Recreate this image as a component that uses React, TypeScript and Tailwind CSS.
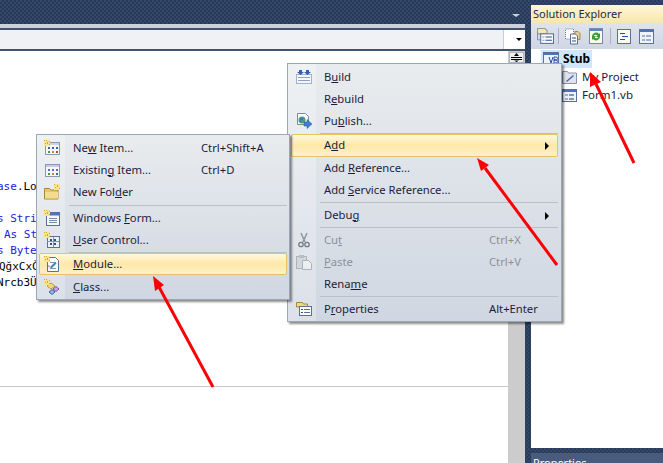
import React from 'react';

const Spark = () => (
  <g>
    <rect x="0" y="0" width="6" height="6" fill="#f8e48a" />
    <path d="M0 0h1v1H0zM2 0h1v1H2zM5 1h1v1H5zM1 3h1v1H1zM3 2h1v2H3zM5 4h1v1H5z" fill="#e0a820" />
  </g>
);

const NewItemIcon = () => (
  <svg width="16" height="16" viewBox="0 0 16 16">
    <rect x="1.5" y="2.5" width="14" height="12" fill="#f4f6fb" stroke="#8a97b5" />
    <rect x="2" y="3" width="13" height="2" fill="#c8d4ec" />
    <path d="M4 7h2v2H4zM8 7h2v2H8zM12 7h2v2h-2z" fill="#3a64b0" />
    <path d="M4 11h2v2H4z" fill="#4a9a3a" />
    <path d="M8 11h2v2H8z" fill="#d08a28" />
    <path d="M12 11h2v2h-2z" fill="#b04a4a" />
    <Spark />
  </svg>
);

const ExistingItemIcon = () => (
  <svg width="16" height="16" viewBox="0 0 16 16">
    <rect x="1.5" y="2.5" width="14" height="12" fill="#f4f6fb" stroke="#8a97b5" />
    <rect x="2" y="3" width="13" height="2" fill="#c8c8ec" />
    <path d="M4 7h2v2H4zM8 7h2v2H8zM12 7h2v2h-2z" fill="#6a64c0" />
    <path d="M4 11h2v2H4z" fill="#4a9a3a" />
    <path d="M8 11h2v2H8z" fill="#d08a28" />
    <path d="M12 11h2v2h-2z" fill="#3a64b0" />
  </svg>
);

const NewFolderIcon = () => (
  <svg width="16" height="16" viewBox="0 0 16 16">
    <path d="M0.5 4.5h5l1.5 1.5h7v9h-13.5z" fill="#e8c76a" stroke="#a8873a" />
    <rect x="1" y="8" width="13" height="6.5" fill="#f3dc90" />
    <rect x="10" y="0" width="6" height="6" fill="#f8e48a" />
    <path d="M10 0h1v1h-1zM13 1h1v2h-1zM15 4h1v1h-1zM11 3h1v1h-1z" fill="#e0a820" />
  </svg>
);

const WindowsFormIcon = () => (
  <svg width="16" height="16" viewBox="0 0 16 16">
    <rect x="2.5" y="2.5" width="13" height="13" fill="#f6f7fb" stroke="#5d6f96" />
    <rect x="3" y="3" width="12" height="2.5" fill="#4c74b8" />
    <path d="M5 8h8v1H5zM5 10h8v1H5zM5 12h8v1H5z" fill="#7d8aa6" />
    <Spark />
  </svg>
);

const UserControlIcon = () => (
  <svg width="16" height="16" viewBox="0 0 16 16">
    <rect x="3.5" y="4.5" width="12" height="11" fill="#eef1f8" stroke="#5d6f96" />
    <path d="M6 7h2v2H6zM10 7h2v2h-2zM6 11h2v2H6zM10 11h2v2h-2z" fill="#2f4e86" />
    <path d="M3 9h12v1H3zM9 5h1v10H9z" fill="#8494b4" />
    <Spark />
  </svg>
);

const ModuleIcon = () => (
  <svg width="16" height="16" viewBox="0 0 16 16">
    <path d="M3.5 1.5h8l3 3v11h-11z" fill="#fbfcff" stroke="#5d6f96" />
    <path d="M6 6h6v1H6zM6 12h6v1H6z" fill="#8494b4" />
    <path d="M6 11l5-5 1.5 1.5-5 5z" fill="#3f8f9e" />
    <path d="M4 9l2 1-1 2z" fill="#c860c0" />
    <Spark />
  </svg>
);

const ClassIcon = () => (
  <svg width="16" height="16" viewBox="0 0 16 16">
    <path d="M3 7l4-3 4 3-4 3z" fill="#f2d97a" stroke="#b89a3a" />
    <path d="M9 10l3-2.5 3 2.5-3 2.5z" fill="#c9a6e6" stroke="#7a55a8" />
    <path d="M5 13l3-2.5 3 2.5-3 2.5z" fill="#8db4e6" stroke="#44689e" />
    <Spark />
  </svg>
);

const BuildIcon = () => (
  <svg width="16" height="16" viewBox="0 0 16 16">
    <rect x="0.5" y="5.5" width="15" height="9" fill="#f4f6fb" stroke="#5d6f96" strokeDasharray="1 1" />
    <path d="M2 8h12v1H2zM2 11h12v1H2z" fill="#8ea0c6" />
    <path d="M3 1h3v2h2L4.500 6 1 3h2zM10 1h3v2h2l-3.500 3L8 3h2z" fill="#2f5fb4" />
  </svg>
);

const PublishIcon = () => (
  <svg width="16" height="16" viewBox="0 0 16 16">
    <path d="M1.500 0.500h8l3 3v8h-11z" fill="#f8f9fc" stroke="#7a88a6" />
    <circle cx="6" cy="7" r="3.500" fill="#4f9e64" />
    <path d="M4 5h3v2H5v2H4z" fill="#3a78c0" />
    <path d="M8 9h3V6.500L16 11l-5 4.500V13H8z" fill="#3f7ed0" stroke="#2a5a9e" strokeWidth="0.5" />
  </svg>
);

const CutIcon = () => (
  <svg width="16" height="16" viewBox="0 0 16 16">
    <path d="M5 1l4 9M11 1L7 10" stroke="#8f949b" strokeWidth="1.500" fill="none" />
    <circle cx="5" cy="12.500" r="2.200" fill="none" stroke="#777c84" strokeWidth="1.300" />
    <circle cx="11" cy="12.500" r="2.200" fill="none" stroke="#777c84" strokeWidth="1.300" />
  </svg>
);

const PasteIcon = () => (
  <svg width="16" height="16" viewBox="0 0 16 16" className="opacity-70">
    <rect x="0.500" y="2.500" width="10" height="12" fill="#cfd2d8" stroke="#9a9ea6" />
    <rect x="3" y="1" width="5" height="3" fill="#a8acb4" />
    <path d="M6.500 6.500h6l3 3v6h-9z" fill="#f2f3f6" stroke="#9a9ea6" />
  </svg>
);

const PropertiesIcon = () => (
  <svg width="16" height="16" viewBox="0 0 16 16">
    <path d="M0.500 1.500h6l1 1.500h4v3h-11z" fill="#f0d78a" stroke="#a8873a" />
    <rect x="3.500" y="5.500" width="12" height="9" fill="#fbfcff" stroke="#5d6f96" />
    <path d="M5 8h2v1H5zM5 11h2v1H5z" fill="#2f4e86" />
    <path d="M8 8h6v1H8zM8 11h6v1H8z" fill="#5d6f96" />
  </svg>
);

const Separator = ({ className }: { className: string }) => (
  <div className={`relative flex items-center ${className}`}>
    <div className="h-px w-full bg-[#b8c0cc]" />
  </div>
);

type RowProps = {
  icon?: React.ReactNode;
  label: React.ReactNode;
  shortcut?: string;
  active?: boolean;
  disabled?: boolean;
  submenu?: boolean;
  labelClass: string;
  height?: string;
};

const MenuRow = ({ icon, label, shortcut, active, disabled, submenu, labelClass, height = 'h-[22px]' }: RowProps) => (
  <div
    className={`relative flex items-center ${height} pl-[4px] border rounded-[2px] ${
      active
        ? 'border-[#e5c365] bg-linear-to-b from-[#fff8dc] via-[#fee8a8] to-[#fdf1c8]'
        : 'border-transparent'
    } ${disabled ? 'text-[#8c9097]' : 'text-[#1c1c3c]'}`}
  >
    <div className="w-[16px] h-[16px] shrink-0">{icon}</div>
    <div className={`whitespace-nowrap ${labelClass}`}>{label}</div>
    {shortcut && <div className="whitespace-nowrap">{shortcut}</div>}
    {submenu && <div className="absolute right-[8px] top-[7px] w-0 h-0 border-y-[4px] border-y-transparent border-l-[4px] border-l-black" />}
  </div>
);

const Arrow = ({ shaft, head }: { shaft: string; head: string }) => (
  <g>
    <polyline points={shaft} stroke="#fb0007" strokeWidth="3" fill="none" />
    <polygon points={head} fill="#fb0007" />
  </g>
);

const navy =
  'bg-[#2e4163] bg-[image:repeating-conic-gradient(#293a59_0_25%,#344869_0_50%)] bg-[length:4px_4px]';

const rightLabel = 'ml-[12px] w-[165px]';
const leftLabel = 'ml-[13px] w-[128px]';

export default function App() {
  return (
    <div
      className={`relative flex w-[663px] h-[463px] overflow-hidden text-[11.25px] ${navy}`}
      style={{ fontFamily: '"Noto Sans", sans-serif' }}
    >
      {/* left: editor */}
      <div className="flex flex-col w-[525px] shrink-0">
        <div className="relative h-[24px] shrink-0">
          <div className="absolute right-[5px] top-[14px] w-0 h-0 border-x-[4px] border-x-transparent border-t-[3px] border-t-[#ced4df]" />
        </div>
        <div className="h-[4px] shrink-0 bg-[#ccd0dd]" />
        <div className="flex justify-end h-[23px] shrink-0 bg-[#f0f1f5] border-y-2 border-[#41526f]">
          <div className="flex items-center justify-end w-[22px] pr-[3px] bg-white border-l border-[#c8ccd4]">
            <div className="w-0 h-0 border-x-[3.5px] border-x-transparent border-t-[3px] border-t-black" />
          </div>
        </div>
        <div className="flex flex-1 min-h-0">
          <div className="flex-1 bg-white flex flex-col">
            <div
              className="h-[336px] shrink-0 pt-[128px] border-b border-[#c8c8c8] text-[11px] leading-[16px] whitespace-nowrap overflow-hidden"
              style={{ fontFamily: '"DejaVu Sans Mono", monospace' }}
            >
              <div className="-ml-[3px]"><span className="text-[#2020e0]">ase</span><span>.Lo</span></div>
              <div className="h-[16px]" />
              <div className="-ml-[3px] text-[#2020e0]">s Stri</div>
              <div className="ml-[4px] text-[#2020e0]">As St</div>
              <div className="-ml-[3px] text-[#2020e0]">s Byte</div>
              <div className="-ml-[1px] text-black">QğxCxČ</div>
              <div className="-ml-[3px] text-black">Nrcb3Ü</div>
            </div>
          </div>
          <div className="w-[17px] shrink-0 bg-[#cccccc] pt-[1px] pl-[1px]">
            <div className="flex items-center justify-center w-[15px] h-[11px] bg-[#eef0f4] border border-[#b0b6c0]">
              <svg width="11" height="9" viewBox="0 0 11 9">
                <path d="M0 4h11v1H0zM0 6h11v1H0z" fill="#000" />
                <path d="M5.500 0L8 3H3zM5.500 9L3 7.500h5z" fill="#000" />
              </svg>
            </div>
          </div>
        </div>
      </div>

      {/* navy gap, then solution explorer */}
      <div className="flex flex-col ml-[6px] flex-1 pt-[5px]">
        <div className="h-[18px] shrink-0 pl-[2px] flex items-center bg-linear-to-b from-[#fff6d6] to-[#f8e6ad] text-[11px] text-[#1b2a44] whitespace-nowrap">
          Solution Explorer
        </div>
        <div className="flex items-center h-[26px] shrink-0 pl-[6px] bg-linear-to-b from-[#dfe3ec] to-[#cfd6e4]">
          <svg width="17" height="17" viewBox="0 0 16 16"><path d="M0.500 0.500h7l2 2v3h-9z" fill="#f3e6b8" stroke="#9a9a8a" /><path d="M0.500 3v8h3" fill="none" stroke="#8a94a6" /><rect x="3.500" y="5.500" width="12" height="9" fill="#fbfcff" stroke="#5d6f96" /><path d="M5 8h2v1H5zM5 11h2v1H5z" fill="#8494b4" /><path d="M8 8h6v1H8zM8 11h6v1H8z" fill="#2f4e86" /></svg>
          <div className="w-px h-[16px] bg-[#a8b2c4] ml-[4px]" />
          <svg className="ml-[6px]" width="16" height="17" viewBox="0 0 16 16"><rect x="0.500" y="0.500" width="8" height="10" fill="#fff" stroke="#707a8c" strokeDasharray="1 1" /><path d="M10 3h3l2 2v6h-5z" fill="#e8cf90" stroke="#a8873a" /><path d="M5.500 5.500h5l2 2v8h-7z" fill="#fbfcff" stroke="#5d6f96" /><path d="M7 9h4v1H7zM7 12h4v1H7z" fill="#2f4e86" /></svg>
          <svg className="ml-[8px]" width="14" height="16" viewBox="0 0 14 16"><rect x="0.500" y="0.500" width="13" height="15" fill="#fbfce8" stroke="#7a88a6" /><rect x="1" y="1" width="12" height="2" fill="#5a86c8" /><path d="M3 8a4 4 0 0 1 7-2l1-1v4H7l1.500-1.500A2.500 2.500 0 0 0 4.500 8zM11 9a4 4 0 0 1-7 2l-1 1V8h4l-1.500 1.500A2.500 2.500 0 0 0 9.500 9z" fill="#3a9a3a" /></svg>
          <div className="w-px h-[16px] bg-[#a8b2c4] ml-[7px]" />
          <svg className="ml-[6px]" width="14" height="15" viewBox="0 0 14 15"><rect x="0.500" y="0.500" width="13" height="14" fill="#fbfcf0" stroke="#5d6f96" /><path d="M3 4h5v1H3zM5 7h6v1H5zM3 10h5v1H3z" fill="#2a4ab0" /></svg>
          <svg className="ml-[8px]" width="15" height="15" viewBox="0 0 15 15"><rect x="0.500" y="0.500" width="14" height="14" fill="#eef2fa" stroke="#5d6f96" /><rect x="1" y="1" width="13" height="2" fill="#4c74b8" /><path d="M3 6h3v2H3zM3 10h3v2H3z" fill="#9fb0cc" /><path d="M7 6h5v2H7zM7 10h5v2H7z" fill="#9fb0cc" /></svg>
        </div>
        <div className="flex-1 bg-white pl-[10px] pt-[1px] text-[11.5px] text-[#1c1c3c]">
          <div className="flex items-center w-[51px] h-[18px] bg-[#cfe6fb] pl-[2px]">
            <svg width="16" height="14" viewBox="0 0 16 14"><rect x="0.500" y="0.500" width="15" height="13" fill="#eef2fa" stroke="#5d6f96" /><rect x="1" y="1" width="14" height="2" fill="#4c74b8" /><path d="M6 5l2 6 2-6M11 5v6h2a1.500 1.500 0 0 0 0-3h-2h2a1.500 1.500 0 0 0 0-3z" fill="none" stroke="#2a4ab0" /></svg>
            <span className="ml-[4px] text-[12px] font-bold text-black">Stub</span>
          </div>
          <div className="flex items-center h-[18px] pl-[21px]">
            <svg width="15" height="13" viewBox="0 0 15 13"><path d="M0.500 0.500h5l1 1.500h8v10.500H0.500z" fill="#dfe3ea" stroke="#8a94a6" /><path d="M4 10l7-6 1 1-7 6z" fill="#4a6ab0" /></svg>
            <span className="ml-[5px] whitespace-nowrap">My Project</span>
          </div>
          <div className="flex items-center h-[18px] pl-[21px]">
            <svg width="15" height="13" viewBox="0 0 15 13"><rect x="0.500" y="0.500" width="14" height="12" fill="#eef2fa" stroke="#5d6f96" /><rect x="1" y="1" width="13" height="2" fill="#4c74b8" /><path d="M3 5h3v2H3zM3 9h3v2H3z" fill="#9fb0cc" /><path d="M7 5h5v2H7zM7 9h5v2H7z" fill="#8494b4" /></svg>
            <span className="ml-[5px] whitespace-nowrap">Form1.vb</span>
          </div>
        </div>
        <div className="h-[5px] shrink-0" />
        <div className="h-[10px] shrink-0 pl-[2px] bg-[#4a5c7e] text-white text-[11px] leading-[20px] whitespace-nowrap overflow-hidden">
          Properties
        </div>
      </div>

      {/* project context menu */}
      <div className="absolute left-[287px] top-[63px] w-[275px] h-[259px] px-[3px] pt-[2px] border border-[#9ba7b7] bg-linear-to-b from-[#e9ecee] to-[#d0d7e2] shadow-[2px_2px_2px_rgba(0,0,0,0.45)]">
        <div className="absolute left-0 top-0 bottom-0 w-[28px] bg-white/25" />
        <MenuRow labelClass={rightLabel} icon={<BuildIcon />} label={<>B<u>u</u>ild</>} />
        <MenuRow labelClass={rightLabel} label={<>R<u>e</u>build</>} />
        <MenuRow labelClass={rightLabel} icon={<PublishIcon />} label={<>Pu<u>b</u>lish...</>} />
        <Separator className="h-[2px] ml-[29px]" />
        <MenuRow labelClass={rightLabel} height="h-[23px]" active submenu label={<>A<u>d</u>d</>} />
        <MenuRow labelClass={rightLabel} label={<>Add <u>R</u>eference...</>} />
        <MenuRow labelClass={rightLabel} label={<>Add <u>S</u>ervice Reference...</>} />
        <Separator className="h-[3px] ml-[29px]" />
        <MenuRow labelClass={rightLabel} submenu label={<>Debu<u>g</u></>} />
        <Separator className="h-[3px] ml-[29px]" />
        <MenuRow labelClass={rightLabel} disabled icon={<CutIcon />} label={<>Cu<u>t</u></>} shortcut="Ctrl+X" />
        <MenuRow labelClass={rightLabel} disabled icon={<PasteIcon />} label={<><u>P</u>aste</>} shortcut="Ctrl+V" />
        <MenuRow labelClass={rightLabel} label={<>Rena<u>m</u>e</>} />
        <Separator className="h-[3px] ml-[29px]" />
        <MenuRow labelClass={rightLabel} icon={<PropertiesIcon />} label={<>P<u>r</u>operties</>} shortcut="Alt+Enter" />
      </div>

      {/* add submenu */}
      <div className="absolute left-[36px] top-[134px] w-[254px] h-[166px] px-[2px] pt-[2px] border border-[#9ba7b7] bg-linear-to-b from-[#e9ecee] to-[#d0d7e2] shadow-[2px_2px_2px_rgba(0,0,0,0.45)]">
        <div className="absolute left-0 top-0 bottom-0 w-[28px] bg-white/25" />
        <MenuRow labelClass={leftLabel} icon={<NewItemIcon />} label={<>Ne<u>w</u> Item...</>} shortcut="Ctrl+Shift+A" />
        <MenuRow labelClass={leftLabel} icon={<ExistingItemIcon />} label={<>Existin<u>g</u> Item...</>} shortcut="Ctrl+D" />
        <MenuRow labelClass={leftLabel} icon={<NewFolderIcon />} label={<>New Fol<u>d</u>er</>} />
        <Separator className="h-[4px] ml-[30px]" />
        <MenuRow labelClass={leftLabel} icon={<WindowsFormIcon />} label={<>Windows <u>F</u>orm...</>} />
        <MenuRow labelClass={leftLabel} icon={<UserControlIcon />} label={<><u>U</u>ser Control...</>} />
        <Separator className="h-[2px] ml-[30px]" />
        <MenuRow labelClass={leftLabel} active icon={<ModuleIcon />} label={<><u>M</u>odule...</>} />
        <div className="h-px" />
        <MenuRow labelClass={leftLabel} icon={<ClassIcon />} label={<><u>C</u>lass...</>} />
      </div>

      {/* red annotation arrows */}
      <svg className="absolute left-0 top-0 pointer-events-none" width="663" height="463" viewBox="0 0 663 463">
        <Arrow shaft="634,163 596,84" head="590,72 590,87 601,82" />
        <Arrow shaft="557,265 485,168" head="477,158 481,171 489,165" />
        <Arrow shaft="213,387 159,287" head="153,276 155,291 164,285" />
      </svg>
    </div>
  );
}
